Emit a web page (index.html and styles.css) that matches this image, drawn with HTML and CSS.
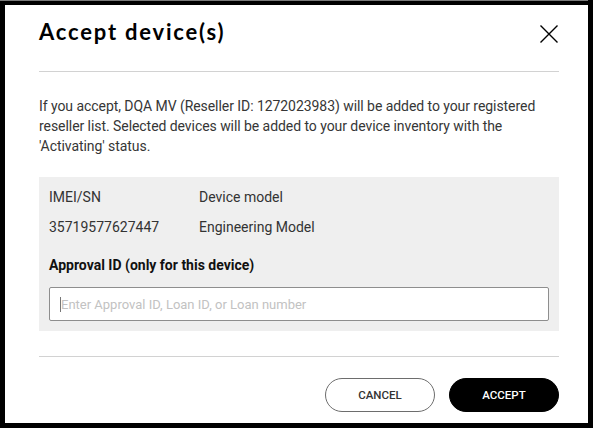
FILE: index.html
```html
<!DOCTYPE html>
<html lang="en">
<head>
<meta charset="utf-8">
<title>Accept device(s)</title>
<link rel="stylesheet" href="styles.css">
</head>
<body>
<div class="screen">
  <div class="dialog" role="dialog" aria-labelledby="dlg-title">
    <header class="dialog-header">
      <h1 id="dlg-title" class="dialog-title">Accept device(s)</h1>
      <button class="close-btn" type="button" aria-label="Close">
        <svg width="18" height="18" viewBox="0 0 18 18" aria-hidden="true">
          <path d="M0.5 0.5 L17.5 17.5 M17.5 0.5 L0.5 17.5" stroke="#000" stroke-width="1.4" fill="none"/>
        </svg>
      </button>
    </header>
    <div class="dialog-body">
      <p class="intro">If you accept, DQA MV (Reseller ID: 1272023983) will be added to your registered reseller list. Selected devices will be added to your device inventory with the 'Activating' status.</p>
      <div class="device-box">
        <div class="device-row">
          <span class="col-imei">IMEI/SN</span>
          <span class="col-model">Device model</span>
        </div>
        <div class="device-row">
          <span class="col-imei">35719577627447</span>
          <span class="col-model">Engineering Model</span>
        </div>
        <label class="field-label" for="approval">Approval ID (only for this device)</label>
        <div class="field">
          <input id="approval" class="field-input" type="text" placeholder="Enter Approval ID, Loan ID, or Loan number">
        </div>
      </div>
    </div>
    <footer class="dialog-footer">
      <button class="btn btn-outline" type="button">CANCEL</button>
      <button class="btn btn-solid" type="button">ACCEPT</button>
    </footer>
  </div>
</div>
</body>
</html>
```
FILE: styles.css
```css
html, body {
  margin: 0;
  padding: 0;
  background: #000;
}
body {
  font-family: Roboto, "Liberation Sans", Arial, sans-serif;
  color: #333;
}
.screen {
  width: 588px;
  height: 428px;
  border-top: 1px solid #7a7a7a;
  box-sizing: border-box;
  padding: 4px 0 0 5px;
}
.dialog {
  width: 583px;
  height: 418px;
  background: #fff;
  box-sizing: border-box;
  padding: 0 29px 0 34px;
  display: flex;
  flex-direction: column;
}
.dialog-header {
  display: flex;
  justify-content: space-between;
  align-items: flex-start;
  padding: 12px 0 24px;
  border-bottom: 1px solid #d2d2d2;
}
.dialog-title {
  margin: 0;
  font-family: Lato, "Open Sans", sans-serif;
  font-weight: 700;
  font-size: 22px;
  line-height: 30px;
  color: #000;
  letter-spacing: 1.8px;
}
.close-btn {
  border: 0;
  background: none;
  padding: 0;
  margin: 8px 1px 0 0;
  width: 18px;
  height: 18px;
  display: block;
  cursor: pointer;
}
.close-btn svg { display: block; }
.dialog-body {
  padding: 24px 0 25px;
  border-bottom: 1px solid #d2d2d2;
}
.intro {
  margin: 0 0 21px;
  font-size: 14px;
  line-height: 20px;
  color: #363636;
  letter-spacing: -0.06px;
}
.device-box {
  background: #efefef;
  padding: 10px 10px 10px;
  display: flex;
  flex-direction: column;
}
.device-row {
  display: flex;
  font-size: 14px;
  line-height: 20px;
  color: #333;
  margin-bottom: 10px;
}
.device-row + .device-row {
  margin-bottom: 18px;
}
.col-imei { width: 150px; }
.field-label {
  font-size: 14px;
  line-height: 20px;
  font-weight: 700;
  color: #111;
  margin-bottom: 12px;
}
.field {
  position: relative;
}
.field::before {
  content: "";
  position: absolute;
  left: 11px;
  top: 10px;
  width: 1px;
  height: 15px;
  background: #777;
}
.field-input {
  display: block;
  width: 100%;
  height: 34px;
  box-sizing: border-box;
  border: 1px solid #8e8e8e;
  border-radius: 2px;
  background: #fff;
  padding: 0 11px;
  font-family: inherit;
  font-size: 13px;
  color: #333;
  outline: none;
}
.field-input::placeholder {
  color: #c2c2c2;
}
.dialog-footer {
  display: flex;
  justify-content: flex-end;
  gap: 14px;
  padding-top: 21px;
}
.btn {
  width: 110px;
  height: 34px;
  border-radius: 17px;
  font-family: Roboto, "Liberation Sans", sans-serif;
  font-size: 11.5px;
  font-weight: 500;
  letter-spacing: 0;
  cursor: pointer;
  padding: 0;
  box-sizing: border-box;
}
.btn-outline {
  background: #fff;
  color: #333;
  border: 1px solid #6d6d6d;
}
.btn-solid {
  background: #000;
  color: #fff;
  border: 1px solid #000;
}
```
